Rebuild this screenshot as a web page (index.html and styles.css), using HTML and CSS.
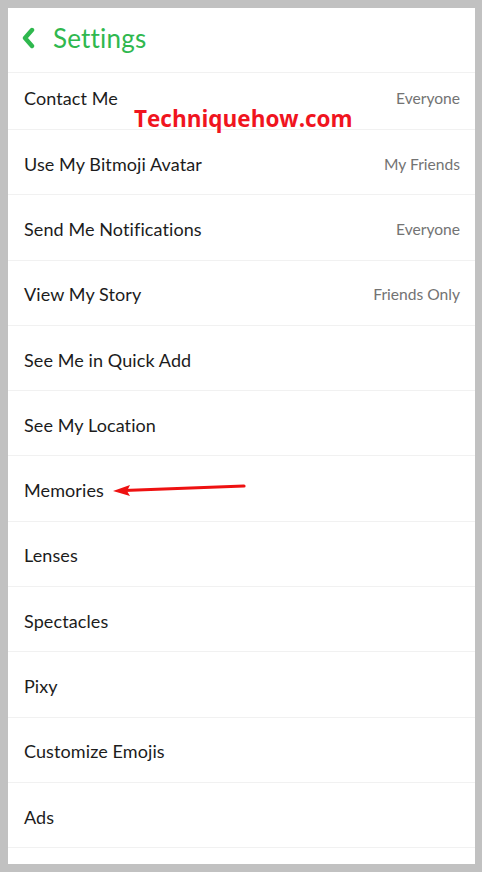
FILE: index.html
```html
<!DOCTYPE html>
<html>
<head>
<meta charset="utf-8">
<link rel="stylesheet" href="styles.css">
</head>
<body>
<div class="panel">
  <header class="header">
    <svg class="back" width="16" height="22" viewBox="0 0 16 22"><path d="M12 3 L5 11 L12 19" fill="none" stroke="#2fb84e" stroke-width="4.4" stroke-linecap="round" stroke-linejoin="round"/></svg>
    <h1 class="title">Settings</h1>
  </header>
  <ul class="list">
    <li class="row first"><span class="label">Contact Me</span><span class="value">Everyone</span></li>
    <li class="row"><span class="label">Use My Bitmoji Avatar</span><span class="value">My Friends</span></li>
    <li class="row"><span class="label">Send Me Notifications</span><span class="value">Everyone</span></li>
    <li class="row"><span class="label">View My Story</span><span class="value">Friends Only</span></li>
    <li class="row"><span class="label">See Me in Quick Add</span></li>
    <li class="row"><span class="label">See My Location</span></li>
    <li class="row"><span class="label">Memories</span></li>
    <li class="row"><span class="label">Lenses</span></li>
    <li class="row"><span class="label">Spectacles</span></li>
    <li class="row"><span class="label">Pixy</span></li>
    <li class="row"><span class="label">Customize Emojis</span></li>
    <li class="row"><span class="label">Ads</span></li>
  </ul>
  <div class="watermark">Techniquehow.com</div>
  <svg class="arrow" width="140" height="20" viewBox="0 0 140 20"><path d="M134 5 L14 9.5" stroke="#ee1111" stroke-width="3.2" stroke-linecap="round"/><path d="M3 10 L20 4 L17 10 L20 15 Z" fill="#ee1111"/></svg>
</div>
</body>
</html>
```
FILE: styles.css
```css
html, body {
  margin: 0;
  padding: 0;
}
body {
  background: #c1c1c1;
  padding: 8px 7px 8px 8px;
  width: 482px;
  height: 872px;
  box-sizing: border-box;
  font-family: Lato, "Noto Sans", sans-serif;
}
.panel {
  position: relative;
  background: #ffffff;
  width: 467px;
  height: 856px;
  overflow: hidden;
}
.header {
  display: flex;
  align-items: center;
  padding-left: 12px;
  border-bottom: 1px solid #f1f1f1;
  box-sizing: border-box;
  height: 65px;
}
.back {
  margin-top: -4px;
}
.title {
  margin: -5px 0 0 17px;
  font-size: 26px;
  font-weight: 400;
  color: #2fb84e;
  letter-spacing: 0.2px;
}
.list {
  list-style: none;
  margin: 0;
  padding: 0;
}
.row {
  height: 65.3px;
  box-sizing: border-box;
  display: flex;
  align-items: center;
  justify-content: space-between;
  padding: 3px 15px 0 16px;
  border-bottom: 1px solid #f1f1f1;
}
.row.first {
  height: 57px;
  padding-top: 0;
  padding-bottom: 6px;
}
.label {
  font-size: 18px;
  color: #1c1c1c;
  letter-spacing: 0.1px;
}
.value {
  font-size: 15.6px;
  color: #737373;
}
.watermark {
  position: absolute;
  left: 126px;
  top: 95px;
  font-family: "Open Sans", sans-serif;
  font-weight: 700;
  font-size: 22.5px;
  color: #f0141e;
}
.arrow {
  position: absolute;
  left: 102px;
  top: 473px;
}
```
